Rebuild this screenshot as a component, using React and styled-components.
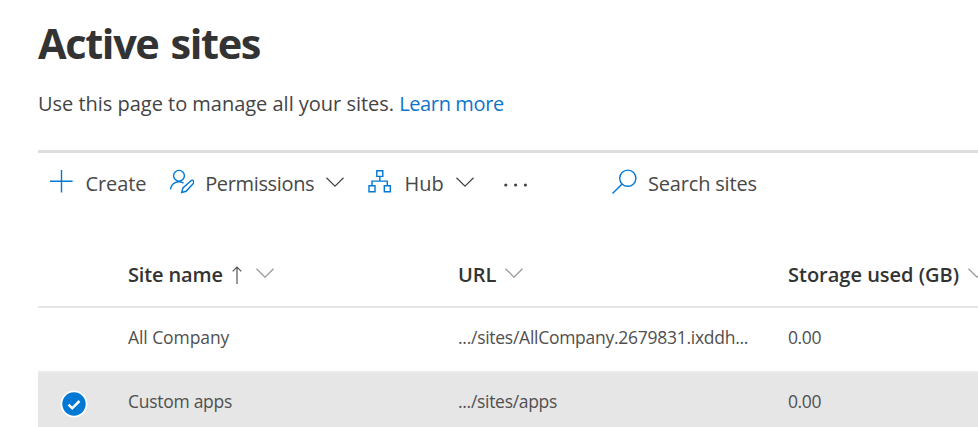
import React from "react";
import styled, { createGlobalStyle } from "styled-components";

const GlobalStyle = createGlobalStyle`
  * { box-sizing: border-box; }
  body {
    margin: 0;
    overflow: hidden;
    background: #fff;
    color: #333;
    font-family: "Segoe UI", "Open Sans", "Noto Sans", sans-serif;
  }
`;

const Page = styled.main`
  width: 978px;
  height: 427px;
  padding-left: 38px;
  overflow: hidden;
`;

const Title = styled.h1`
  height: 90px;
  margin: 0;
  padding-top: 13px;
  font-size: 41.5px;
  line-height: 60px;
  font-weight: 700;
  letter-spacing: -1.38px;
  word-spacing: 2.6px;
`;

const Intro = styled.p`
  height: 60px;
  margin: 0;
  font-size: 20px;
  line-height: 28px;
  letter-spacing: -0.02px;
  white-space: nowrap;
  color: #444;
`;

const Link = styled.a`
  color: #0f75c8;
  letter-spacing: -0.38px;
`;

const Toolbar = styled.div`
  display: flex;
  align-items: flex-start;
  height: 93px;
  padding: 16px 0 0 12px;
  border-top: 3px solid #dedede;
`;

const Command = styled.button`
  display: flex;
  align-items: flex-start;
  width: ${(p) => p.$width}px;
  padding: 0;
  border: 0;
  background: none;
  font: inherit;
  font-size: 20px;
  line-height: 30px;
  text-align: left;
  white-space: nowrap;
  color: #484848;
`;

const CommandIcon = styled.svg`
  flex: none;
  width: 26px;
  height: 26px;
  margin-right: ${(p) => p.$gap}px;
  fill: none;
  stroke: #0078d4;
  stroke-width: 1.4;
`;

const Label = styled.span`
  letter-spacing: ${(p) => p.$spacing || 0}px;
`;

const ChevronIcon = styled.svg`
  flex: none;
  width: 18px;
  height: 10px;
  margin: ${(p) => p.$top}px 0 0 ${(p) => p.$left}px;
  fill: none;
  stroke: ${(p) => p.$color};
  stroke-width: 1.3;
`;

const MoreIcon = styled.svg`
  width: 26px;
  height: 26px;
  margin-left: 1px;
  fill: #444;
`;

const SortIcon = styled.svg`
  flex: none;
  width: 10px;
  height: 19px;
  margin: 5px 0 0 9px;
  fill: none;
  stroke: #555;
  stroke-width: 1.2;
`;

const Grid = styled.div`
  width: 940px;
`;

const Row = styled.div`
  display: grid;
  grid-template-columns: 90px 330px 330px 190px;
  height: 63px;
  padding-top: 15px;
  font-size: 17.5px;
  line-height: 28px;
  white-space: nowrap;
  color: #505050;
`;

const HeaderRow = styled(Row)`
  height: 65px;
  padding-top: 18px;
  border-bottom: 2px solid #e6e6e6;
  font-size: 20px;
  font-weight: 600;
  color: #333;
`;

const SelectedRow = styled(Row)`
  height: 56px;
  padding-top: 14px;
  border-top: 2px solid #ebebeb;
  background: #e6e6e6;
`;

const Cell = styled.div`
  display: flex;
  align-items: flex-start;
`;

const CheckBadge = styled.svg`
  width: 28px;
  height: 28px;
  margin: 3px 0 0 22px;
`;

function Chevron({ left, top = 8, color = "#484848" }) {
  return (
    <ChevronIcon viewBox="0 0 18 10" $left={left} $top={top} $color={color}>
      <path d="M.5 .7 9 9.1 17.5 .7" />
    </ChevronIcon>
  );
}

export default function App() {
  return (
    <>
      <GlobalStyle />
      <Page>
        <Title>Active sites</Title>
        <Intro>
          Use this page to manage all your sites. <Link>Learn more</Link>
        </Intro>
        <Toolbar>
          <Command $width={118}>
            <CommandIcon $gap={9.5} viewBox="0 0 26 26">
              <path d="M11.5 1v22.6M0 12.3h22.6" />
            </CommandIcon>
            <Label $spacing={-0.08}>Create</Label>
          </Command>
          <Command $width={199}>
            <CommandIcon $gap={11.2} viewBox="0 0 26 26">
              <circle cx="11" cy="6.8" r="5.4" />
              <path d="M2.5 20.4a8.6 8.6 0 0 1 13-6.3" />
              <path d="m13.7 23.5 1.2-4.6 8.1-7.2c2-1.2 3.7 1 2.3 2.8l-7.2 7.8z" />
            </CommandIcon>
            <Label $spacing={-0.35}>Permissions</Label>
            <Chevron left={12} />
          </Command>
          <Command $width={136}>
            <CommandIcon $gap={11.5} viewBox="0 0 26 26">
              <path d="M9.8 1.8h6v5.6h-6zM2 16.8h6v6H2zM17.3 16.8h6v6h-6zM12.8 7.4v4.7M5 16.8v-4.7h15.3v4.7" />
            </CommandIcon>
            <Label>Hub</Label>
            <Chevron left={12} />
          </Command>
          <Command $width={109} aria-label="More">
            <MoreIcon viewBox="0 0 26 26">
              <circle cx="1.8" cy="16" r="1.6" />
              <circle cx="11.6" cy="16" r="1.6" />
              <circle cx="21.4" cy="16" r="1.6" />
            </MoreIcon>
          </Command>
          <Command $width={160}>
            <CommandIcon $gap={10} viewBox="0 0 26 26">
              <circle cx="15.8" cy="9.2" r="8.1" />
              <path d="M10.1 14.9.5 24.6" />
            </CommandIcon>
            <Label $spacing={-0.18}>Search sites</Label>
          </Command>
        </Toolbar>
        <Grid>
          <HeaderRow>
            <Cell />
            <Cell>
              <Label $spacing={-0.15}>Site name</Label>
              <SortIcon viewBox="0 0 10 19">
                <path d="M5 18V1M.7 5.3 5 1l4.3 4.3" />
              </SortIcon>
              <Chevron left={14} top={7} color="#999" />
            </Cell>
            <Cell>
              <Label $spacing={-0.1}>URL</Label>
              <Chevron left={9} top={7} color="#999" />
            </Cell>
            <Cell>
              <Label>Storage used (GB)</Label>
              <Chevron left={9} top={7} color="#999" />
            </Cell>
          </HeaderRow>
          <Row>
            <Cell />
            <Cell><Label $spacing={-0.08}>All Company</Label></Cell>
            <Cell><Label $spacing={-0.27}>.../sites/AllCompany.2679831.ixddh...</Label></Cell>
            <Cell><Label $spacing={-0.4}>0.00</Label></Cell>
          </Row>
          <SelectedRow>
            <Cell>
              <CheckBadge viewBox="0 0 28 28">
                <circle cx="14" cy="14" r="13.5" fill="#fff" />
                <circle cx="14" cy="14" r="11.7" fill="#0078d4" />
                <path d="m8.6 14.7 3.6 3.6 7.3-7.3" fill="none" stroke="#fff" strokeWidth="2.5" />
              </CheckBadge>
            </Cell>
            <Cell><Label $spacing={-0.28}>Custom apps</Label></Cell>
            <Cell><Label $spacing={-0.3}>.../sites/apps</Label></Cell>
            <Cell><Label $spacing={-0.4}>0.00</Label></Cell>
          </SelectedRow>
        </Grid>
      </Page>
    </>
  );
}
